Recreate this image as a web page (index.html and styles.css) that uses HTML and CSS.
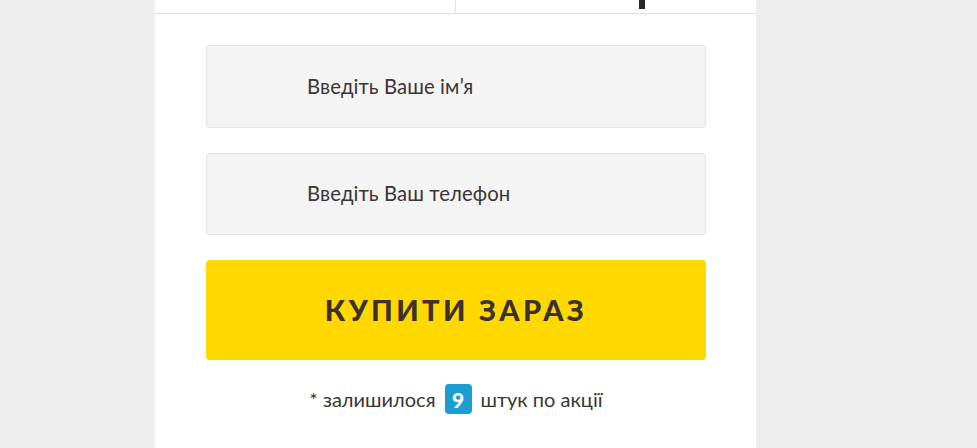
FILE: index.html
```html
<!DOCTYPE html>
<html lang="uk">
<head>
<meta charset="utf-8">
<link rel="stylesheet" href="styles.css">
</head>
<body>
<div class="page">
  <div class="column">
    <div class="tabs">
      <div class="tab"></div>
      <div class="tab"><span class="glyph"></span></div>
    </div>
    <form class="form">
      <div class="field">Введіть Ваше ім’я</div>
      <div class="field">Введіть Ваш телефон</div>
      <div class="buy">КУПИТИ ЗАРАЗ</div>
      <div class="left">* залишилося <span class="badge">9</span> штук по акції</div>
    </form>
  </div>
</div>
</body>
</html>
```
FILE: styles.css
```css
html, body { margin: 0; padding: 0; }
body { background: #eeeeee; font-family: "Lato", "Noto Sans", sans-serif; color: #3b3535; }
.page { width: 977px; height: 448px; overflow: hidden; display: flex; }
.column { margin-left: 155px; width: 601px; background: #ffffff; height: 448px; }
.tabs { display: flex; height: 13px; border-bottom: 1px solid #e2e2e2; }
.tab { flex: 0 0 300px; position: relative; }
.tab + .tab { border-left: 1px solid #e2e2e2; flex: 1; }
.glyph { position: absolute; left: 183px; top: 0; width: 6px; height: 9px; background: #2b2626; }
.form { display: flex; flex-direction: column; padding: 31px 50px 0 51px; }
.field { box-sizing: border-box; border: 1px solid #e3e3e3; border-radius: 3px; background: #f4f4f4; margin-bottom: 25px; padding-left: 100px; padding-bottom: 2px; display: flex; align-items: center; font-size: 20.3px; letter-spacing: 0.1px; color: #3a3535; height: 83px; }
.field + .field { height: 82px; }
.buy { height: 100px; background: #ffd800; border-radius: 4px; display: flex; align-items: center; justify-content: center; font-size: 29px; font-weight: 900; letter-spacing: 3.4px; color: #3b3131; padding-bottom: 2px; box-sizing: border-box; }
.left { margin-top: 24px; display: flex; align-items: center; justify-content: center; font-size: 20px; color: #3a3535; gap: 9px; }
.badge { width: 27px; height: 30px; border-radius: 4px; background: #1a9ecf; color: #fff; font-weight: 900; display: inline-flex; align-items: center; justify-content: center; font-size: 21px; }
```
